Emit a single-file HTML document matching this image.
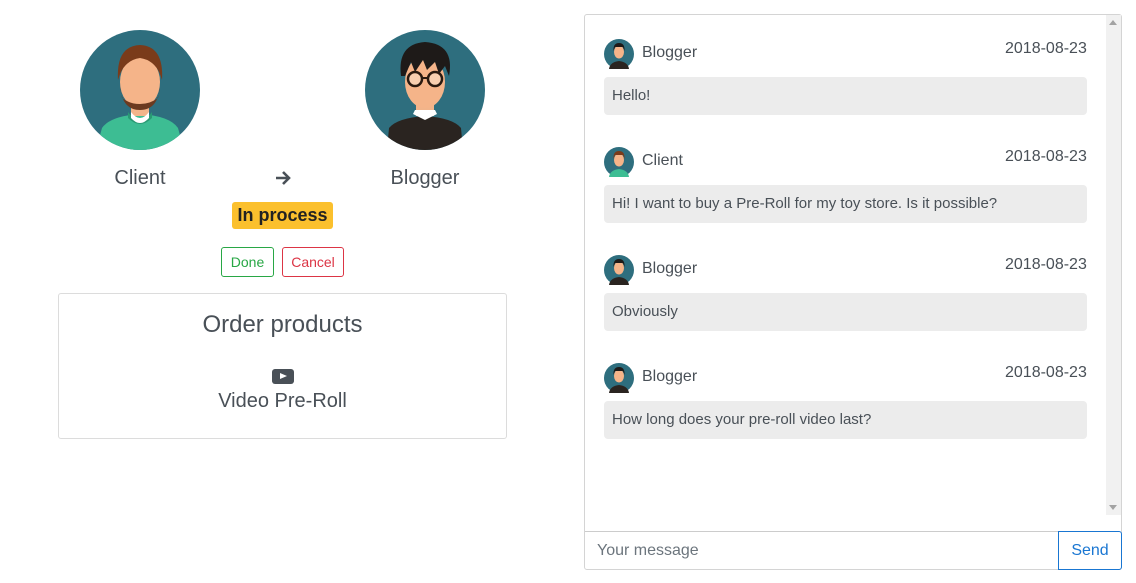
<!DOCTYPE html>
<html><head><meta charset="utf-8"><style>
*{box-sizing:border-box;margin:0;padding:0}
body{width:1136px;height:583px;background:#fff;font-family:"Liberation Sans",sans-serif;color:#495057;position:relative;overflow:hidden}
.abs{position:absolute}
.name{font-size:20px;text-align:center;width:160px}
.badge{left:232px;top:202px;width:101px;height:27px;background:#fbc02d;border-radius:3px;color:#222;font-size:18px;font-weight:bold;text-align:center;line-height:27px}
.btn{height:30px;border:1px solid;border-radius:3px;font-size:14px;line-height:28px;text-align:center;top:247px}
.card{left:58px;top:293px;width:449px;height:146px;border:1px solid #dcdcdc;border-radius:3px}
.chat{left:584px;top:14px;width:538px;height:556px;border:1px solid #d4d4d4;border-radius:3px}
.msg{left:604px;width:483px}
.bubble{background:#ececec;border-radius:4px;height:38px;line-height:38px;padding-left:8px;font-size:15px}
.hdr{font-size:16px}
</style></head><body>
<svg class="abs" style="left:80px;top:30px" width="120" height="120" viewBox="0 0 120 120">
<defs><clipPath id="c1"><circle cx="60" cy="60" r="60"/></clipPath></defs>
<circle cx="60" cy="60" r="60" fill="#2e6e7e"/>
<g clip-path="url(#c1)">
<path d="M16 120 L22 98 Q30 86 60 84 Q90 86 98 98 L104 120Z" fill="#3dbd93"/>
<path d="M48 82 Q60 98 72 82 L72 88 Q60 100 48 88Z" fill="#2a9a74"/>
<rect x="51" y="70" width="18" height="16" fill="#f2b48a"/>
<path d="M51 82 Q60 94 69 82 L69 88 Q60 98 51 88Z" fill="#fff"/>
<ellipse cx="60" cy="52" rx="20" ry="26" fill="#f5b489"/>
<path d="M40 56 Q42 80 60 80 Q78 80 80 56 L78 68 Q70 74 60 74 Q50 74 42 68Z" fill="#6b3a20"/>
<path d="M38 50 Q36 16 60 15 Q84 16 82 50 L80 44 Q74 30 60 28 Q46 30 40 44Z" fill="#7a3b1a"/>
</g></svg>
<svg class="abs" style="left:365px;top:30px" width="120" height="120" viewBox="0 0 120 120">
<defs><clipPath id="c2"><circle cx="60" cy="60" r="60"/></clipPath></defs>
<circle cx="60" cy="60" r="60" fill="#2e6e7e"/>
<g clip-path="url(#c2)">
<path d="M22 120 L24 98 Q32 88 60 86 Q88 88 96 98 L98 120Z" fill="#2a2420"/>
<rect x="51" y="70" width="18" height="16" fill="#f2b48a"/>
<path d="M48 84 L60 90 L72 84 L70 80 L50 80Z" fill="#fff"/>
<ellipse cx="60" cy="52" rx="20" ry="26" fill="#f5b489"/>
<path d="M36 46 Q32 14 60 12 Q90 14 84 46 L80 36 L74 44 L70 32 L62 40 L58 30 L50 42 L46 32 L40 46Z" fill="#1e1a18"/>
<circle cx="50" cy="49" r="7" fill="#f8cfb0" stroke="#2a1a10" stroke-width="2.5"/>
<circle cx="70" cy="49" r="7" fill="#f8cfb0" stroke="#2a1a10" stroke-width="2.5"/>
<path d="M57 48 L63 48" stroke="#2a1a10" stroke-width="2"/>
</g></svg>
<div class="abs name" style="left:60px;top:167px">Client</div>
<svg class="abs" style="left:275px;top:170px" width="16" height="16" viewBox="0 0 16 16"><path d="M1 8 H14 M8 2 L14 8 L8 14" stroke="#495057" stroke-width="2.6" fill="none"/></svg>
<div class="abs name" style="left:345px;top:167px">Blogger</div>
<div class="abs badge">In process</div>
<div class="abs btn" style="left:221px;width:53px;color:#28a745;border-color:#28a745">Done</div>
<div class="abs btn" style="left:282px;width:62px;color:#dc3545;border-color:#dc3545">Cancel</div>
<div class="abs card">
<div style="text-align:center;font-size:24px;margin-top:17px">Order products</div>
<div style="width:22px;height:15px;background:#495057;border-radius:3px;margin:30px auto 0;position:relative"><div style="position:absolute;left:8px;top:4px;border-left:7px solid #fff;border-top:3.5px solid transparent;border-bottom:3.5px solid transparent"></div></div>
<div style="text-align:center;font-size:20px;margin-top:6px">Video Pre-Roll</div>
</div>
<div class="abs chat">
<div class="abs" style="right:0;top:0;width:15px;height:500px;background:#f1f1f1"></div>
<div class="abs" style="right:4px;top:5px;border-bottom:5px solid #a3a3a3;border-left:4px solid transparent;border-right:4px solid transparent"></div>
<div class="abs" style="right:4px;top:490px;border-top:5px solid #a3a3a3;border-left:4px solid transparent;border-right:4px solid transparent"></div>
<div class="abs" style="left:0;top:516px;width:475px;height:39px;border-top:1px solid #ccc;font-size:16px;color:#6c757d;padding:10px 12px">Your message</div>
<div class="abs" style="left:473px;top:516px;width:64px;height:39px;border:1px solid #1976d2;border-radius:0 3px 3px 0;color:#1976d2;font-size:16px;text-align:center;line-height:37px">Send</div>
</div>
<div id="m"></div>
<script>
const data=[["B","Blogger","Hello!",39],["C","Client","Hi! I want to buy a Pre-Roll for my toy store. Is it possible?",147],["B","Blogger","Obviously",255],["B","Blogger","How long does your pre-roll video last?",363]];
let h="";
for(const [t,n,m,y] of data){
const col=t=="B"?"#2a2420":"#3dbd93",hair=t=="B"?"#1e1a18":"#7a3b1a";
h+=`<svg class="abs" style="left:604px;top:${y}px" width="30" height="30" viewBox="0 0 30 30"><circle cx="15" cy="15" r="15" fill="#2e6e7e"/><path d="M5 30 Q6 23 15 22 Q24 23 25 30Z" fill="${col}"/><ellipse cx="15" cy="13" rx="5" ry="6.5" fill="#f5b489"/><path d="M9.5 12 Q9 4 15 4 Q21 4 20.5 12 L19 8 L11 8Z" fill="${hair}"/></svg>
<div class="abs hdr" style="left:642px;top:${y+5}px">${n}</div>
<div class="abs hdr" style="left:1005px;top:${y+1}px">2018-08-23</div>
<div class="abs msg bubble" style="top:${y+38}px">${m}</div>`;}
document.getElementById("m").innerHTML=h;
</script>
</body></html>
